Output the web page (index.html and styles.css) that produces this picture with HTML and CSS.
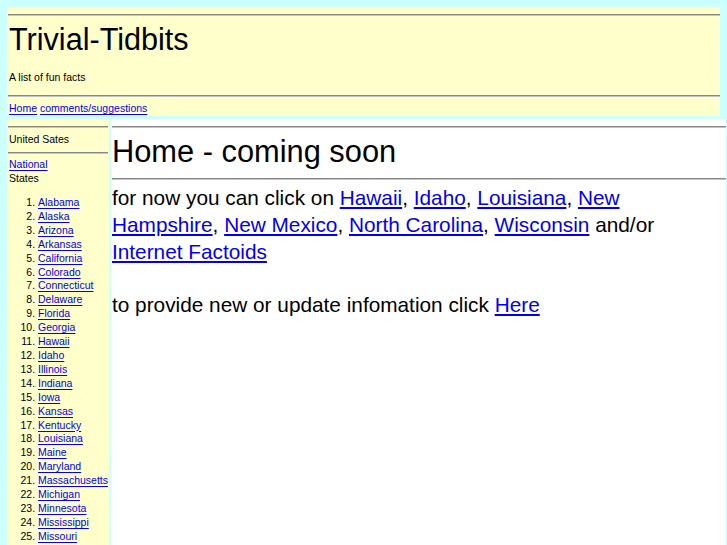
FILE: index.html
```html
<!DOCTYPE html>
<html lang="en">
<head>
  <meta charset="UTF-8">
  <title>Trivial-Tidbits</title>
  <link rel="stylesheet" href="styles.css">
</head>
<body>
  <div class="header">
    <hr>
    <h1 class="title">Trivial-Tidbits</h1>
    <div class="tagline">A list of fun facts</div>
    <hr>
    <div class="nav"><a href="#">Home</a> <a href="#">comments/suggestions</a></div>
  </div>

  <div class="page">
    <div class="sidebar">
      <hr>
      <div class="side-title">United Sates</div>
      <hr>
      <div class="side-line"><a href="#">National</a></div>
      <div class="side-line">States</div>
      <ol class="states">
        <li><a href="#">Alabama</a></li>
        <li><a href="#">Alaska</a></li>
        <li><a href="#">Arizona</a></li>
        <li><a href="#">Arkansas</a></li>
        <li><a href="#">California</a></li>
        <li><a href="#">Colorado</a></li>
        <li><a href="#">Connecticut</a></li>
        <li><a href="#">Delaware</a></li>
        <li><a href="#">Florida</a></li>
        <li><a href="#">Georgia</a></li>
        <li><a href="#">Hawaii</a></li>
        <li><a href="#">Idaho</a></li>
        <li><a href="#">Illinois</a></li>
        <li><a href="#">Indiana</a></li>
        <li><a href="#">Iowa</a></li>
        <li><a href="#">Kansas</a></li>
        <li><a href="#">Kentucky</a></li>
        <li><a href="#">Louisiana</a></li>
        <li><a href="#">Maine</a></li>
        <li><a href="#">Maryland</a></li>
        <li><a href="#">Massachusetts</a></li>
        <li><a href="#">Michigan</a></li>
        <li><a href="#">Minnesota</a></li>
        <li><a href="#">Mississippi</a></li>
        <li><a href="#">Missouri</a></li>
        <li><a href="#">Montana</a></li>
        <li><a href="#">Nebraska</a></li>
        <li><a href="#">Nevada</a></li>
        <li><a href="#">New Hampshire</a></li>
        <li><a href="#">New Jersey</a></li>
      </ol>
    </div>

    <div class="main">
      <hr>
      <h1 class="heading">Home - coming soon</h1>
      <hr>
      <p class="lead">for now you can click on <a href="#">Hawaii</a>, <a href="#">Idaho</a>, <a href="#">Louisiana</a>, <a href="#">New Hampshire</a>, <a href="#">New Mexico</a>, <a href="#">North Carolina</a>, <a href="#">Wisconsin</a> and/or <a href="#">Internet Factoids</a></p>
      <p class="lead update">to provide new or update infomation click <a href="#">Here</a></p>
    </div>
  </div>
</body>
</html>
```

FILE: styles.css
```css
body {
  margin: 0;
  padding: 7px 0 0 7px;
  background: #ccffff;
  font-family: "Liberation Sans", Arial, sans-serif;
  font-size: 10.5px;
  color: #000;
}
a {
  color: #0000ee;
  text-underline-offset: 2px;
}
hr {
  margin: 0;
  height: 0;
  border: none;
  border-top: 1px solid #888;
  border-bottom: 1px solid #c4c4c4;
}
.header {
  width: 712px;
  background: #ffffcc;
  padding: 7px 0 1px 1px;
}
.title {
  margin: 5px 0 0 1px;
  font-size: 30.6px;
  line-height: 36px;
  font-weight: normal;
}
.tagline {
  margin: 13px 0 11px 1px;
  line-height: 14px;
}
.nav {
  margin: 4px 0 0 1px;
  line-height: 14px;
}
.page {
  display: flex;
  gap: 2px;
  margin-top: 3px;
}
.sidebar {
  width: 101px;
  background: #ffffcc;
  padding: 7px 0 0 1px;
}
.sidebar hr {
  margin-right: 1px;
}
.side-title {
  margin: 4px 0 6px 1px;
  line-height: 14px;
}
.side-line {
  margin: 3px 0 0 1px;
  line-height: 14px;
}
.side-line + .side-line {
  margin-top: 0;
}
.states {
  margin: 11px 0 0;
  padding-left: 30px;
  line-height: 13.9px;
}
.main {
  width: 614px;
  background: #fff;
  padding: 7px 0 0 1px;
  min-height: 430px;
}
.heading {
  margin: 6px 0 8px 0;
  font-size: 30.8px;
  line-height: 36px;
  font-weight: normal;
}
.lead {
  margin: 4px 0 0;
  font-size: 20.8px;
  line-height: 27px;
}
.update {
  margin-top: 26px;
}
```
